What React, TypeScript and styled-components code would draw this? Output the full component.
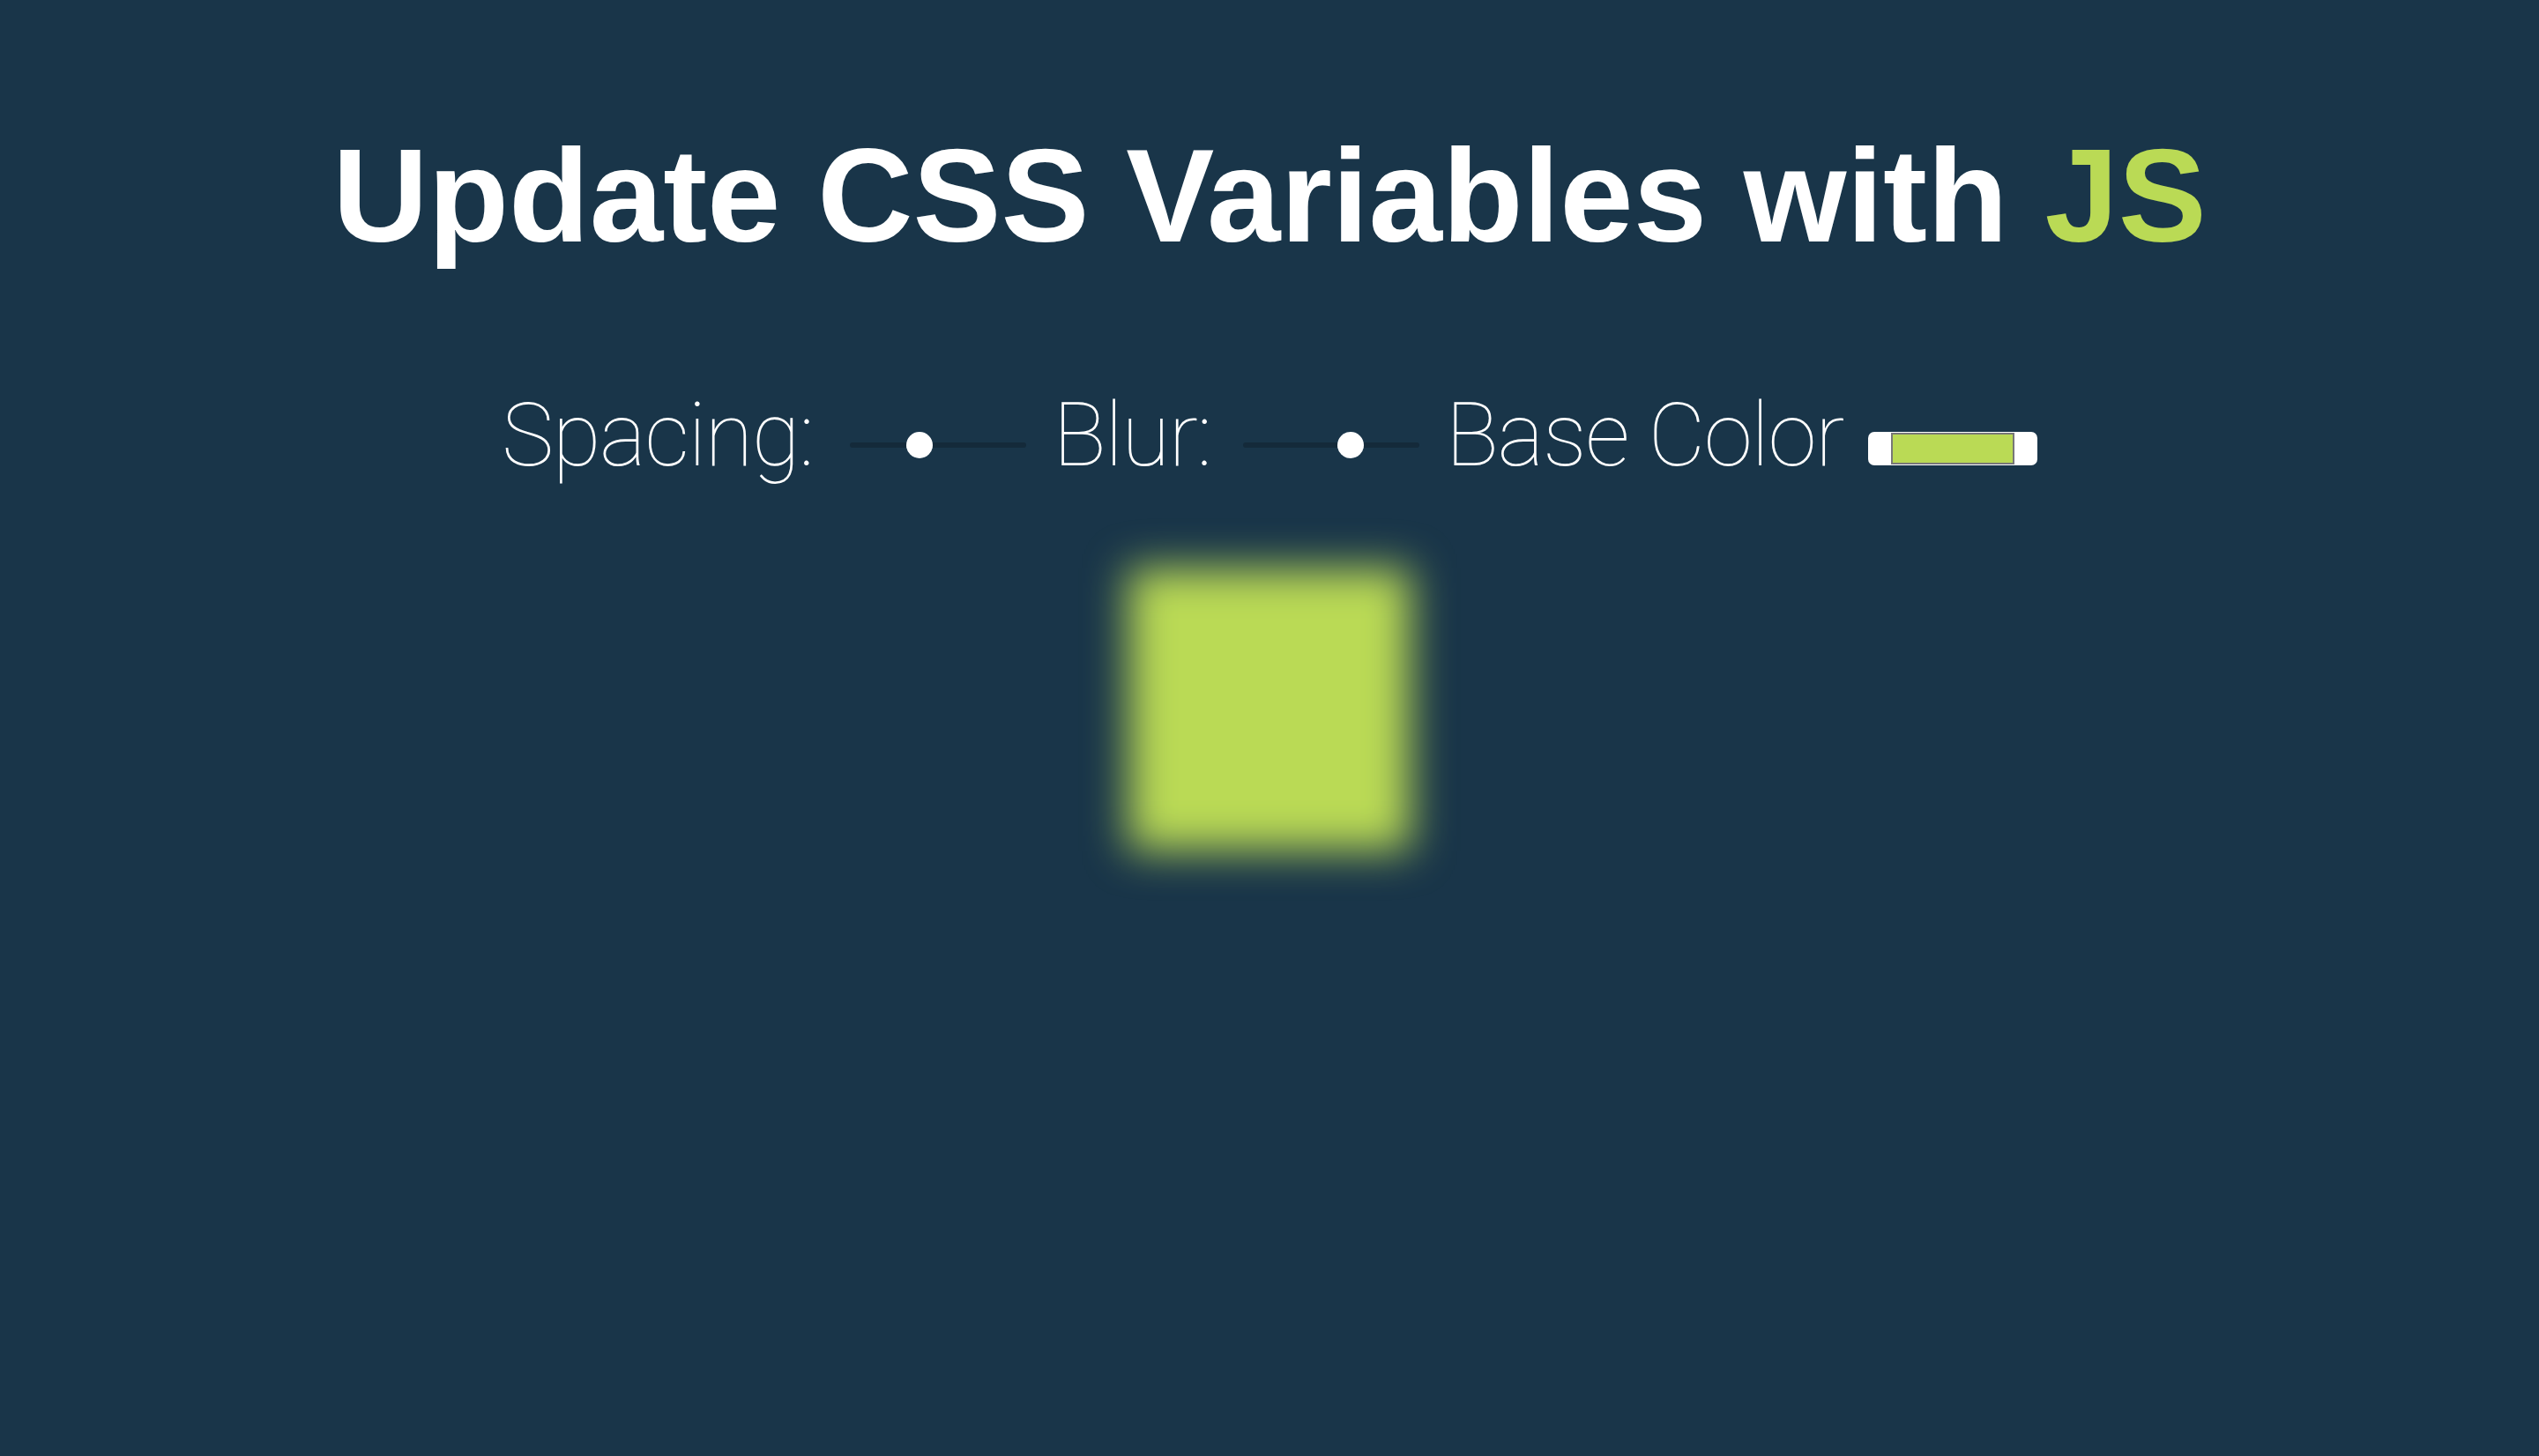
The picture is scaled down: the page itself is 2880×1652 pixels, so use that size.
import React from 'react';
import styled, { createGlobalStyle } from 'styled-components';

const GlobalStyle = createGlobalStyle`
  html, body {
    margin: 0;
    padding: 0;
    background: #193549;
  }
  body {
    min-height: 1652px;
    color: #ffffff;
    font-family: Roboto, "Liberation Sans", sans-serif;
  }
`;

const Page = styled.main`
  display: flex;
  flex-direction: column;
  align-items: center;
  padding-top: 138px;
`;

const Title = styled.h2`
  margin: 0;
  font-family: "Liberation Sans", Arial, sans-serif;
  font-size: 150px;
  font-weight: 700;
  line-height: 168px;
  color: #ffffff;
`;

const Highlight = styled.span`
  color: #bada55;
`;

const Controls = styled.div`
  display: flex;
  align-items: center;
  margin-top: 138px;
`;

const Label = styled.label<{ $gap: number }>`
  font-family: Roboto, Inter, "Liberation Sans", sans-serif;
  font-size: 100px;
  font-weight: 100;
  line-height: 100px;
  letter-spacing: -1.5px;
  margin-right: ${(p) => p.$gap}px;
`;

const Slider = styled.input`
  -webkit-appearance: none;
  appearance: none;
  width: 200px;
  height: 30px;
  margin: 22px 30px 0 0;
  padding: 0;
  background: transparent;

  &::-webkit-slider-runnable-track {
    height: 6px;
    border-radius: 3px;
    background: #142a3a;
  }

  &::-webkit-slider-thumb {
    -webkit-appearance: none;
    appearance: none;
    width: 30px;
    height: 30px;
    margin-top: -12px;
    border: none;
    border-radius: 50%;
    background: #ffffff;
  }
`;

const ColorPicker = styled.input`
  -webkit-appearance: none;
  appearance: none;
  width: 192px;
  height: 38px;
  margin: 30px 0 0 0;
  padding: 0;
  border: none;
  border-radius: 7px;
  background: #ffffff;

  &::-webkit-color-swatch-wrapper {
    padding: 1px 26px;
  }

  &::-webkit-color-swatch {
    border: 2px solid #777777;
    border-radius: 0;
  }
`;

const Stage = styled.div`
  padding-top: 101px;
`;

const Picture = styled.div`
  width: 320px;
  height: 320px;
  background: #bada55;
  filter: blur(24px);
`;

export default function App() {
  return (
    <>
      <GlobalStyle />
      <Page>
        <Title>
          Update CSS Variables with <Highlight>JS</Highlight>
        </Title>
        <Controls>
          <Label htmlFor="spacing" $gap={42}>
            Spacing:
          </Label>
          <Slider id="spacing" type="range" name="spacing" min={0} max={170} defaultValue={64} />
          <Label htmlFor="blur" $gap={36}>
            Blur:
          </Label>
          <Slider id="blur" type="range" name="blur" min={0} max={170} defaultValue={107} />
          <Label htmlFor="base" $gap={28}>
            Base Color
          </Label>
          <ColorPicker id="base" type="color" name="base" defaultValue="#bada55" />
        </Controls>
        <Stage>
          <Picture />
        </Stage>
      </Page>
    </>
  );
}
